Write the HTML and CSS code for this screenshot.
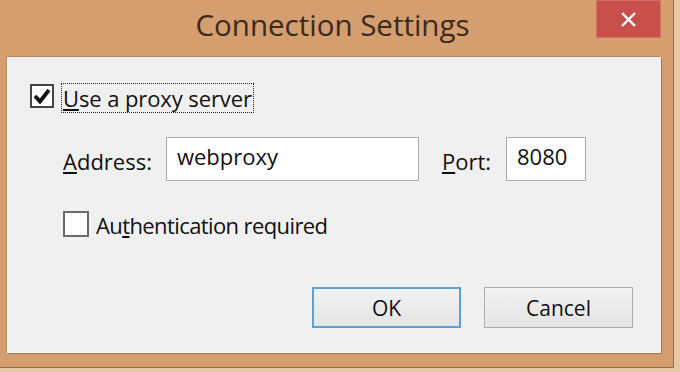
FILE: index.html
```html
<!DOCTYPE html>
<html>
<head>
<meta charset="utf-8">
<link rel="stylesheet" href="styles.css">
</head>
<body>
<div class="window">
  <div class="titlebar">
    <div class="title">Connection Settings</div>
    <div class="close"><svg width="15" height="15" viewBox="0 0 16 16"><path d="M2 2 L14 14 M14 2 L2 14" stroke="#fff" stroke-width="2.4" stroke-linecap="square"/></svg></div>
  </div>
  <div class="panel">
    <div class="row-proxy">
      <span class="box checked"><svg width="20" height="20" viewBox="0 0 20 20"><path d="M3 10 L8 15.5 L17 4" fill="none" stroke="#111" stroke-width="3.8" stroke-linejoin="miter"/></svg></span>
      <span class="focus"><u>U</u>se a proxy server</span>
    </div>
    <div class="row-addr">
      <span class="label"><u>A</u>ddress:</span>
      <span class="field addr">webproxy</span>
      <span class="label port-label"><u>P</u>ort:</span>
      <span class="field port">8080</span>
    </div>
    <div class="row-auth">
      <span class="box"></span>
      <span class="auth-text">Au<u>t</u>hentication required</span>
    </div>
    <div class="buttons">
      <span class="btn ok">OK</span>
      <span class="btn cancel">Cancel</span>
    </div>
  </div>
</div>
</body>
</html>
```

FILE: styles.css
```css
html, body {
  margin: 0;
  padding: 0;
  background: #e6c7a6;
}
body {
  width: 680px;
  height: 372px;
  overflow: hidden;
  font-family: "Open Sans", "Noto Sans", sans-serif;
}
.window {
  width: 673px;
  height: 367px;
  background: #d49e6f;
  border-right: 1px solid #8e6c4e;
  border-bottom: 1px solid #8e6c4e;
}
.titlebar {
  height: 57px;
  display: grid;
  grid-template-columns: 1fr auto 1fr;
  align-items: start;
}
.title {
  grid-column: 2;
  font-size: 29.5px;
  line-height: 41px;
  color: #3b2b1e;
  padding-top: 4px;
  margin-left: -8px;
}
.close {
  grid-column: 3;
  justify-self: end;
  margin-right: 12px;
  width: 65px;
  height: 38px;
  background: #c9504a;
  display: flex;
  align-items: center;
  justify-content: center;
  box-shadow: inset 0 0 0 1px #d4706a;
}
.panel {
  margin-left: 7px;
  width: 652px;
  height: 294px;
  background: #f0f0f0;
  border: 1px solid #fbf3ec;
  box-shadow: -1px -1px 0 #b48a64, 1px 1px 0 #9c7656;
  color: #111;
  font-size: 22px;
}
.row-proxy {
  display: flex;
  align-items: center;
  margin-top: 23px;
  margin-left: 22px;
  height: 30px;
}
.box {
  width: 20px;
  height: 20px;
  border: 2px solid #555;
  background: #fff;
  display: flex;
  align-items: center;
  justify-content: center;
  flex: none;
}
.box.checked {
  border-color: #444;
}
.focus {
  margin-left: 8px;
  margin-top: 3px;
  padding: 0 1px 0 1px;
  outline: 1px dotted #222;
  outline-offset: 0px;
  line-height: 28px;
  letter-spacing: -0.1px;
}
.row-addr {
  display: flex;
  align-items: center;
  margin-top: 26px;
  margin-left: 55px;
  height: 44px;
}
.label {
  margin-top: 3px;
}
.field {
  border: 1px solid #ababab;
  background: #fff;
  box-sizing: border-box;
  height: 44px;
  padding: 4px 0 0 10px;
  line-height: 28px;
}
.addr {
  width: 253px;
  margin-left: 14px;
}
.port-label {
  margin-left: 23px;
}
.port {
  width: 80px;
  margin-left: 15px;
}
.row-auth {
  display: flex;
  align-items: center;
  margin-top: 30px;
  margin-left: 55px;
  height: 26px;
}
.row-auth .box {
  width: 22px;
  height: 22px;
  border: 2px solid #6a6a6a;
}
.auth-text {
  margin-left: 7px;
  margin-top: 2px;
  letter-spacing: -0.6px;
}
.buttons {
  display: flex;
  justify-content: flex-end;
  gap: 23px;
  margin-top: 50px;
  margin-right: 27px;
}
.btn {
  width: 149px;
  height: 41px;
  box-sizing: border-box;
  display: flex;
  align-items: center;
  justify-content: center;
  background: linear-gradient(#f2f2f2, #e4e4e4);
  border: 1px solid #acacac;
  font-size: 21px;
  color: #111;
}
.btn.ok {
  border: 2px solid #5aa0dc;
}
```
